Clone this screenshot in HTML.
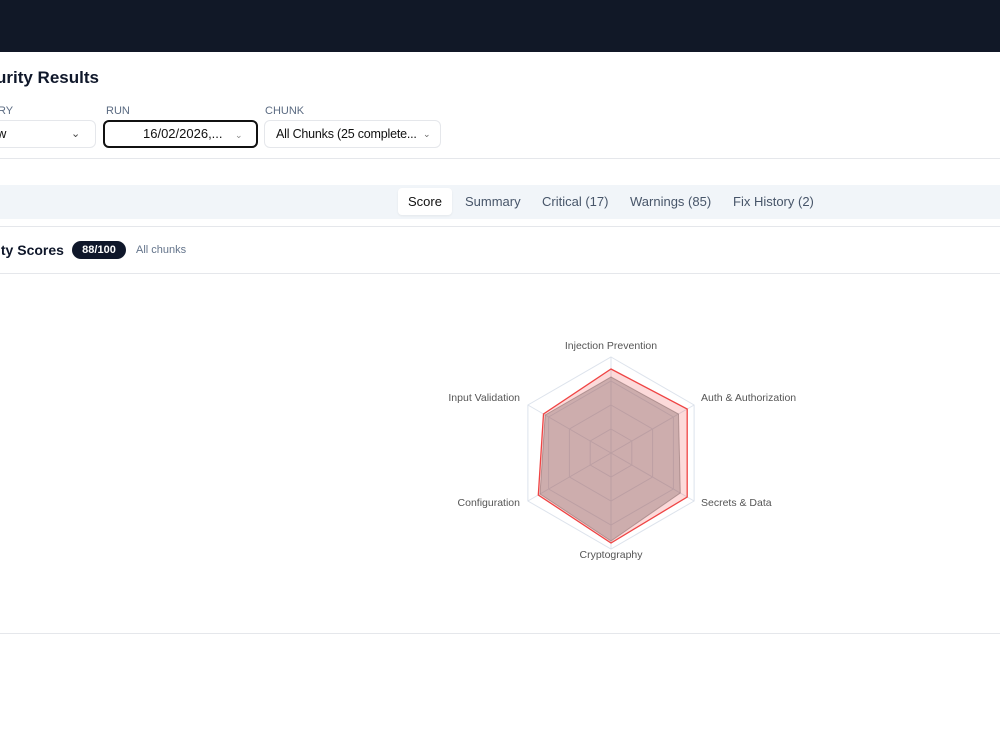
<!DOCTYPE html>
<html><head><meta charset="utf-8"><style>
*{margin:0;padding:0;box-sizing:border-box}
body{width:1000px;height:750px;overflow:hidden;background:#fff;font-family:"Liberation Sans",sans-serif;position:relative;color:#0f172a}
.a{position:absolute}
.lbl{font-size:11px;color:#5b6b82;top:105px}
.sel{top:120px;height:28px;border:1px solid #e5e7eb;border-radius:6px;font-size:13px;line-height:26px;color:#111}
.tab{top:188px;height:27px;line-height:27px;font-size:13px;color:#475569}
.hr{left:0;width:1000px;height:1px;background:#e5e7eb}
</style></head><body>
<div class="a" style="left:0;top:0;width:1000px;height:52px;background:#111827"></div>
<div class="a" style="left:-4px;top:68px;font-size:17px;font-weight:bold">urity Results</div>
<div class="a lbl" style="left:-2px">RY</div>
<div class="a lbl" style="left:106px">RUN</div>
<div class="a lbl" style="left:265px">CHUNK</div>
<div class="a sel" style="left:-10px;width:106px;padding-left:6px">w<span class="a" style="left:80px;top:0;font-size:11px;color:#444">&#8964;</span></div>
<div class="a sel" style="left:103px;width:155px;border:2px solid #111;padding-left:38px;line-height:24px">16/02/2026,...<span class="a" style="left:130px;top:1px;font-size:9px;color:#888">&#8964;</span></div>
<div class="a sel" style="left:264px;width:177px;padding-left:11px;font-size:12.5px;letter-spacing:-0.2px">All Chunks (25 complete...<span class="a" style="left:158px;top:0px;font-size:9px;color:#666">&#8964;</span></div>
<div class="a hr" style="top:158px"></div>
<div class="a" style="left:0;top:185px;width:1000px;height:34px;background:#f1f5f9"></div>
<div class="a tab" style="left:398px;width:54px;background:#fff;border-radius:4px;text-align:center;color:#111;box-shadow:0 1px 2px rgba(0,0,0,.06)">Score</div>
<div class="a tab" style="left:465px">Summary</div>
<div class="a tab" style="left:542px">Critical (17)</div>
<div class="a tab" style="left:630px">Warnings (85)</div>
<div class="a tab" style="left:733px">Fix History (2)</div>
<div class="a hr" style="top:226px"></div>
<div class="a" style="left:-3px;top:242px;font-size:14px;font-weight:bold">ity Scores</div>
<div class="a" style="left:72px;top:241px;width:54px;height:18px;border-radius:9px;background:#0f172a;color:#fff;font-size:11px;font-weight:bold;text-align:center;line-height:18px">88/100</div>
<div class="a" style="left:136px;top:244px;font-size:11px;color:#64748b">All chunks</div>
<div class="a hr" style="top:273px"></div>
<div class="a hr" style="top:633px"></div>
<svg class="a" style="left:0;top:0" width="1000" height="750">
<g fill="none" stroke="#dde3ec" stroke-width="1">
<polygon points="611,357 694.1,405 694.1,501 611,549 527.9,501 527.9,405"/>
<polygon points="611,381 673.4,417 673.4,489 611,525 548.6,489 548.6,417"/>
<polygon points="611,405 652.6,429 652.6,477 611,501 569.4,477 569.4,429"/>
<polygon points="611,429 631.8,441 631.8,465 611,477 590.2,465 590.2,441"/>
<line x1="611" y1="453" x2="611" y2="357"/><line x1="611" y1="453" x2="694.1" y2="405"/><line x1="611" y1="453" x2="694.1" y2="501"/><line x1="611" y1="453" x2="611" y2="549"/><line x1="611" y1="453" x2="527.9" y2="501"/><line x1="611" y1="453" x2="527.9" y2="405"/>
</g>
<polygon points="611,369 687.2,409 687.2,497 611,543 538.3,495 543.5,414" fill="rgba(239,68,68,0.2)" stroke="#ef4444" stroke-width="1.3"/>
<polygon points="611,377 678.5,414 680.3,493 611,541 540,494 545.2,415" fill="rgba(130,100,100,0.38)" stroke="rgba(130,100,100,0.5)" stroke-width="1"/>
<g font-family="Liberation Sans,sans-serif" font-size="10.5" fill="#555">
<text x="611" y="349" text-anchor="middle">Injection Prevention</text>
<text x="701" y="401">Auth &amp; Authorization</text>
<text x="701" y="506">Secrets &amp; Data</text>
<text x="611" y="558" text-anchor="middle">Cryptography</text>
<text x="520" y="506" text-anchor="end">Configuration</text>
<text x="520" y="401" text-anchor="end">Input Validation</text>
</g>
</svg>
</body></html>
